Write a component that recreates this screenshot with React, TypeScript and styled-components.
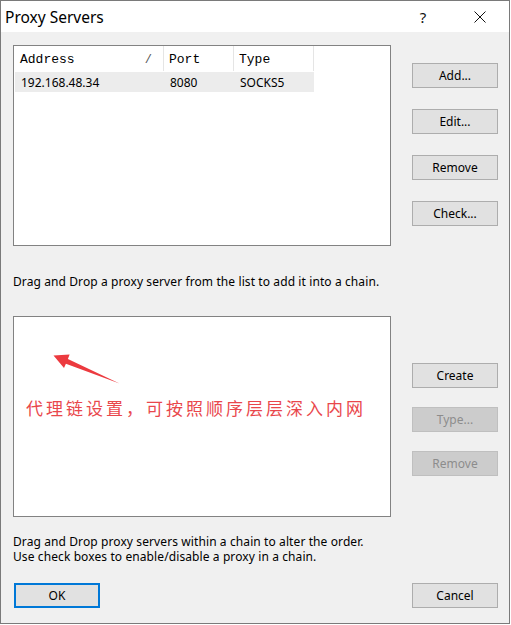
import React from "react";
import styled, { createGlobalStyle } from "styled-components";

const Global = createGlobalStyle`
  html, body { margin: 0; padding: 0; background: #ffffff; }
  body { font-family: "Noto Sans", "Segoe UI", sans-serif; }
`;

const Window = styled.div`
  box-sizing: border-box;
  width: 510px;
  height: 624px;
  border: 1px solid #7a7a7a;
  background: #f0f0f0;
  display: flex;
  flex-direction: column;
  font-family: "Noto Sans", sans-serif;
  font-size: 12px;
  color: #000;
`;

const TitleBar = styled.div`
  height: 31px;
  background: #ffffff;
  display: flex;
  align-items: center;
  padding-left: 4px;
`;

const Title = styled.div`
  flex: 1;
  font-size: 15.5px;
  color: #000;
`;

const TitleButton = styled.div<{ $w: number }>`
  width: ${(p) => p.$w}px;
  height: 31px;
  display: flex;
  align-items: center;
  justify-content: center;
  font-size: 15px;
  color: #111;
`;

const Body = styled.div`
  display: flex;
  flex-direction: column;
  padding: 13px 0 0 12px;
`;

const Section = styled.div<{ $top?: number }>`
  display: flex;
  margin-top: ${(p) => p.$top ?? 0}px;
`;

const Box = styled.div`
  position: relative;
  box-sizing: border-box;
  width: 378px;
  height: 201px;
  background: #ffffff;
  border: 1px solid #828282;
`;

const ButtonColumn = styled.div<{ $pad: number; $gap: number }>`
  display: flex;
  flex-direction: column;
  margin-left: 21px;
  padding-top: ${(p) => p.$pad}px;
  gap: ${(p) => p.$gap}px;
`;

const Button = styled.div<{ $disabled?: boolean; $default?: boolean }>`
  box-sizing: border-box;
  width: 86px;
  height: 25px;
  display: flex;
  align-items: center;
  justify-content: center;
  font-size: 12px;
  background: ${(p) => (p.$disabled ? "#cccccc" : "#e1e1e1")};
  border: ${(p) =>
    p.$default ? "2px solid #0078d7" : p.$disabled ? "1px solid #bfbfbf" : "1px solid #adadad"};
  color: ${(p) => (p.$disabled ? "#8c8c8c" : "#000")};
`;

const Grid = styled.div`
  display: grid;
  grid-template-columns: 149px 70px 80px;
  padding-left: 1px;
`;

const HeadCell = styled.div`
  position: relative;
  height: 25px;
  box-sizing: border-box;
  padding-top: 2px;
  display: flex;
  align-items: center;
  padding-left: 5px;
  font-family: "Liberation Mono", monospace;
  font-size: 13px;
  border-right: 1px solid #e5e5e5;
`;

const SortMark = styled.span`
  position: absolute;
  right: 11px;
  top: 7px;
  font-family: "Liberation Mono", monospace;
  font-size: 12px;
  color: #555;
`;

const DataCell = styled.div`
  height: 20px;
  margin-top: 1px;
  display: flex;
  align-items: center;
  padding-left: 6px;
  background: #ececec;
  font-size: 12px;
`;

const Hint = styled.div<{ $top: number }>`
  margin-top: ${(p) => p.$top}px;
  line-height: 16px;
  font-size: 12px;
  letter-spacing: 0.1px;
`;

const Notes = styled.div`
  margin-top: 17px;
  display: flex;
  flex-direction: column;
`;

const NoteLine = styled.div`
  height: 15px;
  line-height: 15px;
  font-size: 12px;
  letter-spacing: 0.1px;
  white-space: nowrap;
`;

const Footer = styled.div`
  display: flex;
  justify-content: space-between;
  margin-top: 19px;
  padding-left: 1px;
  width: 485px;
  box-sizing: border-box;
`;

const Annotation = styled.div`
  position: absolute;
  left: 12px;
  top: 80px;
  font-family: "Noto Sans CJK SC", sans-serif;
  font-size: 17px;
  letter-spacing: 3px;
  color: #e9474c;
  line-height: 22px;
  white-space: nowrap;
`;

const ArrowSvg = styled.svg`
  position: absolute;
  left: 0;
  top: 0;
`;

export default function App() {
  return (
    <>
      <Global />
      <Window>
        <TitleBar>
          <Title>Proxy Servers</Title>
          <TitleButton $w={56}>?</TitleButton>
          <TitleButton $w={58}>
            <svg width="12" height="12" viewBox="0 0 12 12">
              <path d="M0.5 0.5 L11.5 11.5 M11.5 0.5 L0.5 11.5" stroke="#111" strokeWidth="1" />
            </svg>
          </TitleButton>
        </TitleBar>
        <Body>
          <Section>
            <Box>
              <Grid>
                <HeadCell>
                  Address<SortMark>/</SortMark>
                </HeadCell>
                <HeadCell>Port</HeadCell>
                <HeadCell>Type</HeadCell>
                <DataCell>192.168.48.34</DataCell>
                <DataCell>8080</DataCell>
                <DataCell>SOCKS5</DataCell>
              </Grid>
            </Box>
            <ButtonColumn $pad={18} $gap={21}>
              <Button>Add...</Button>
              <Button>Edit...</Button>
              <Button>Remove</Button>
              <Button>Check...</Button>
            </ButtonColumn>
          </Section>
          <Hint $top={28}>Drag and Drop a proxy server from the list to add it into a chain.</Hint>
          <Section $top={26}>
            <Box>
              <ArrowSvg width="120" height="80" viewBox="0 0 120 80">
                <polygon
                  points="39.5,38.5 55.6,37.5 53.9,42.1 105.5,66.5 51.9,46.7 50,51"
                  fill="#ec3a3f"
                />
              </ArrowSvg>
              <Annotation>代理链设置，可按照顺序层层深入内网</Annotation>
            </Box>
            <ButtonColumn $pad={47} $gap={19}>
              <Button>Create</Button>
              <Button $disabled>Type...</Button>
              <Button $disabled>Remove</Button>
            </ButtonColumn>
          </Section>
          <Notes>
            <NoteLine>Drag and Drop proxy servers within a chain to alter the order.</NoteLine>
            <NoteLine>Use check boxes to enable/disable a proxy in a chain.</NoteLine>
          </Notes>
          <Footer>
            <Button $default>OK</Button>
            <Button>Cancel</Button>
          </Footer>
        </Body>
      </Window>
    </>
  );
}
